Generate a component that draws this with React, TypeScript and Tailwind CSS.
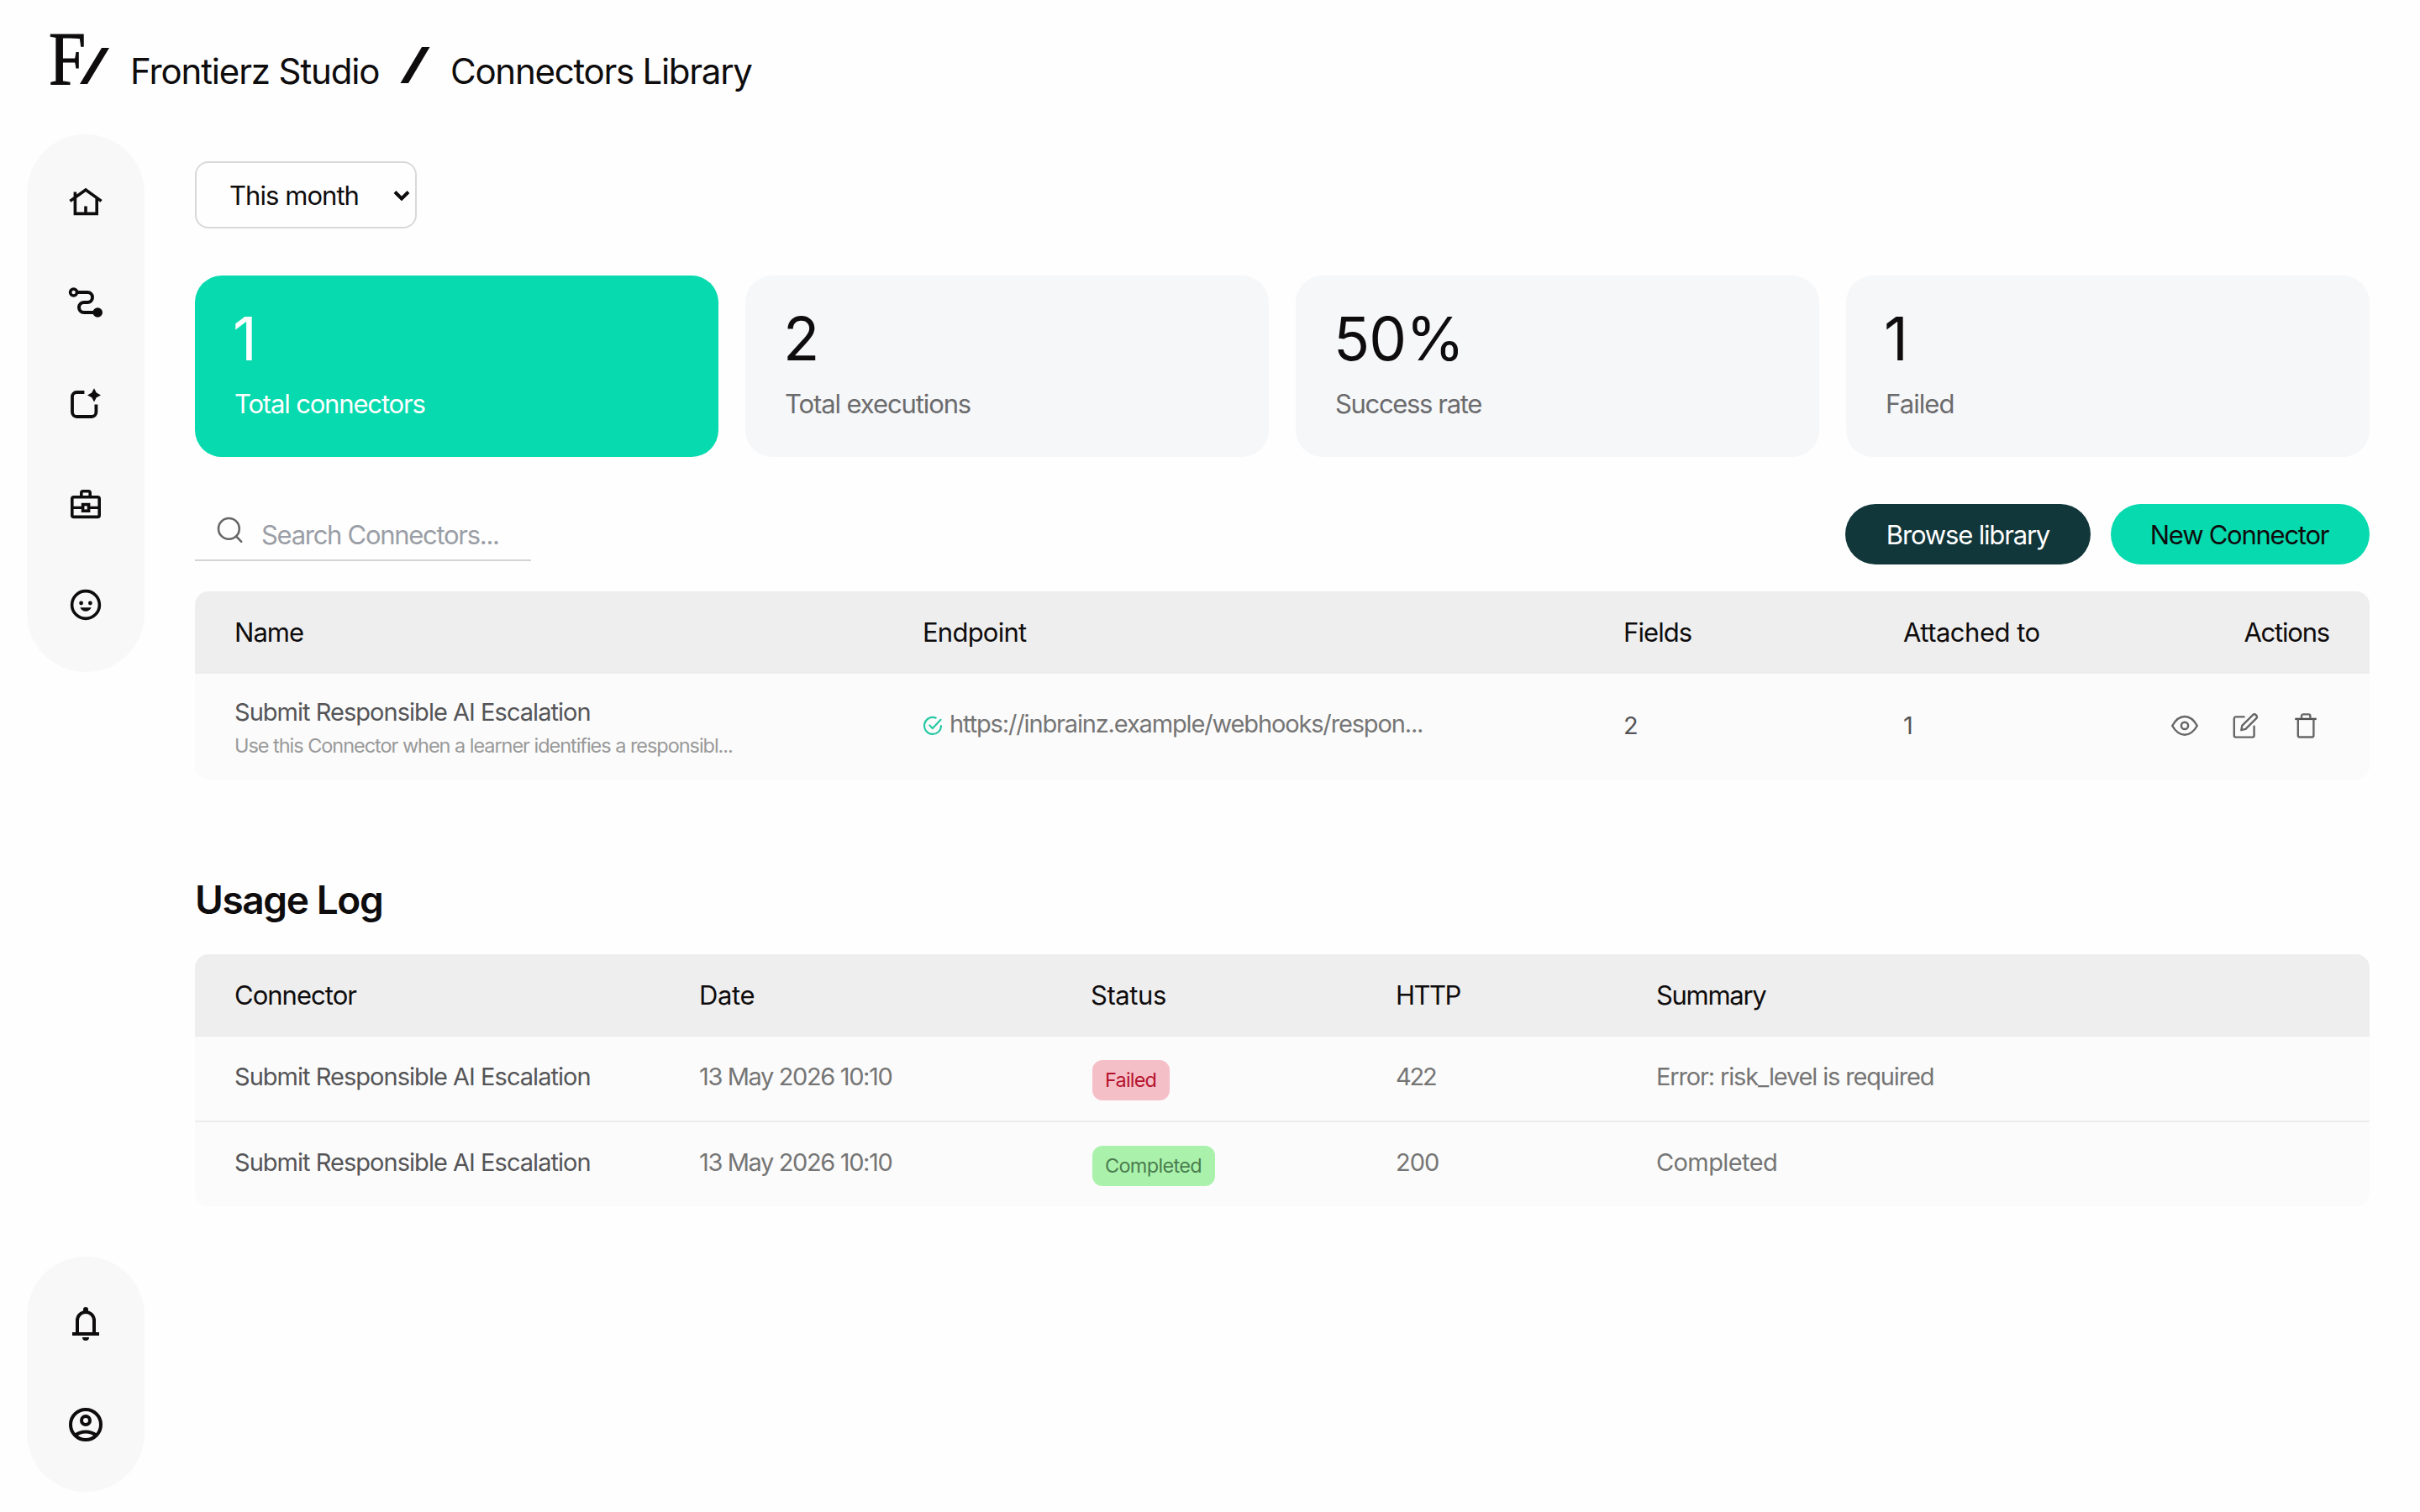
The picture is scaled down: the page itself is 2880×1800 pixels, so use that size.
import type { ReactNode } from 'react';
import clsx from 'clsx';

function NavIcon({ label, children }: { label: string; children: ReactNode }) {
  return (
    <button aria-label={label} className="flex h-[120px] w-full items-center justify-center text-[#0e0c0d]">
      <svg viewBox="0 0 24 24" className="size-12" fill="none" stroke="currentColor" strokeWidth={1.8}>
        {children}
      </svg>
    </button>
  );
}

function Sidebar() {
  return (
    <aside className="flex w-[140px] shrink-0 flex-col justify-between">
      <nav className="flex h-[640px] flex-col rounded-full bg-[#f8f8f8] pt-5">
        <NavIcon label="Home">
          <path d="M2.7 11.7 12 5l9.3 6.7M5.7 9.6V19.2h12.9V9.6M5.7 10V6.2M12 19.2v-4.4" />
        </NavIcon>
        <NavIcon label="Journeys">
          <circle cx="4.8" cy="6" r="2" />
          <path d="M6.8 6H13a3 3 0 0 1 0 6h-2a3 3 0 0 0 0 6h6" strokeWidth={2} />
          <circle cx="19.1" cy="18" r="2.9" fill="currentColor" stroke="none" />
        </NavIcon>
        <NavIcon label="Create">
          <path d="M11.2 5.5H6.6A2.6 2.6 0 0 0 4 8.1v9.3A2.6 2.6 0 0 0 6.6 20h9A2.6 2.6 0 0 0 18.2 17.4v-4.7" strokeWidth={1.9} />
          <path
            d="M17 3.1 18.4 5.8 21 7.2 18.4 8.6 17 11.3 15.6 8.6 13 7.2 15.6 5.8Z"
            fill="currentColor"
            stroke="none"
          />
        </NavIcon>
        <NavIcon label="Toolbox">
          <rect x="3.9" y="7.9" width="16.2" height="11.8" rx="1" />
          <path d="M9.4 7.6V5.4a1 1 0 0 1 1-1h3.2a1 1 0 0 1 1 1v2.2" />
          <path d="M4 14.2h6M14 14.2h6" strokeWidth={1.6} />
          <rect x="10.3" y="12.3" width="3.5" height="3.8" />
        </NavIcon>
        <NavIcon label="Assistants">
          <circle cx="12" cy="12" r="8.2" />
          <g fill="currentColor" stroke="none">
            <circle cx="9.3" cy="11" r="1.2" />
            <circle cx="14.7" cy="11" r="1.2" />
            <path d="M8.7 13.6h6.6c-.6 1.4-1.8 2.3-3.3 2.3s-2.7-.9-3.3-2.3Z" />
          </g>
        </NavIcon>
      </nav>
      <nav className="flex h-[280px] flex-col rounded-full bg-[#f8f8f8] pt-5">
        <NavIcon label="Notifications">
          <path d="M7 18v-8a5 5 0 0 1 10 0v8M4 18h16" strokeWidth={2} />
          <path d="M10.5 4.5v-1a1.5 1.5 0 0 1 3 0v1ZM10 20h4a2 2 0 0 1-4 0Z" fill="currentColor" stroke="none" />
        </NavIcon>
        <NavIcon label="Account">
          <circle cx="12" cy="12" r="9" strokeWidth={2} />
          <circle cx="12" cy="9.5" r="2.5" strokeWidth={2} />
          <path d="M5.7 18.4a10.4 10.4 0 0 1 12.6 0" strokeWidth={2} />
        </NavIcon>
      </nav>
    </aside>
  );
}

function Header() {
  return (
    <header className="flex h-40 shrink-0 items-start pt-10 pl-[58px] text-[42px] leading-[52px]">
      <div className="flex w-[97px] items-start">
        <span className="w-9 origin-left scale-x-[.88] font-['Liberation_Serif',serif] text-[90px] leading-[61px] [-webkit-text-stroke:1.2px_#0e0c0d]">
          F
        </span>
        <svg viewBox="0 0 35 43" className="mt-[17px] ml-px h-[43px] w-[35px]">
          <path d="M0 43 26 0h9L9 43Z" fill="#0e0c0d" />
        </svg>
      </div>
      <span className="mt-[19px] w-[321px] tracking-[-1.13px] whitespace-nowrap">Frontierz Studio</span>
      <svg viewBox="0 0 35 43" className="mt-4 mr-6 h-[43px] w-9">
        <path d="M0 43 25.5 0h9.5L9.5 43Z" fill="#0e0c0d" />
      </svg>
      <span className="mt-[19px] tracking-[-1.26px]">Connectors Library</span>
    </header>
  );
}

const stats = [
  { value: '1', label: 'Total connectors', tracking: 'tracking-[-1.16px]', active: true },
  { value: '2', label: 'Total executions', tracking: 'tracking-[-1.1px]' },
  { value: '50%', label: 'Success rate', tracking: 'tracking-[-1.35px]' },
  { value: '1', label: 'Failed', tracking: 'tracking-[-0.9px]' },
];

function StatCards() {
  return (
    <div className="mt-14 grid grid-cols-4 gap-8">
      {stats.map((s, i) => (
        <div
          key={i}
          className={clsx('h-[216px] rounded-[32px] px-12 pt-[38px]', s.active ? 'bg-[#06daae] text-white' : 'bg-[#f6f7f9]')}
        >
          <p className="-ml-[3px] pt-px text-[71px] leading-[72px] tracking-[-0.9px]">{s.value}</p>
          <p className={clsx('mt-[22px] -ml-px text-[31px] leading-10', s.tracking, !s.active && 'text-[#6b6b6d]')}>{s.label}</p>
        </div>
      ))}
    </div>
  );
}

function Toolbar() {
  return (
    <div className="mt-14 flex h-[72px] justify-between text-[31px]">
      <label className="flex h-[68px] w-[400px] items-center border-b-2 border-[#d4d4d4] pl-[26px]">
        <svg viewBox="0 0 32 32" className="-mt-1 size-8" fill="none" stroke="#666" strokeWidth={2.6}>
          <circle cx="14.4" cy="14.4" r="12.4" />
          <path d="m23.2 23.6 6 6.2" strokeLinecap="round" />
        </svg>
        <span className="mt-[7px] ml-[21px] leading-10 tracking-[-1.29px] text-[#9a9ea6]">Search Connectors...</span>
      </label>
      <div className="flex gap-6">
        <button className="w-[292px] rounded-full bg-[#12373a] pt-[3px] tracking-[-1.17px] text-white">Browse library</button>
        <button className="w-[308px] rounded-full bg-[#06daae] pt-[3px] pr-0.5 tracking-[-1.25px]">New Connector</button>
      </div>
    </div>
  );
}

function ConnectorsTable() {
  return (
    <section className="mt-8 overflow-hidden rounded-2xl bg-[#fbfbfb]">
      <div className="grid h-[98px] grid-cols-[818px_834px_333px_1fr] items-center border-b-2 border-[#ececec] bg-[#eeeeee] px-12 pt-[3px] text-[31px]">
        <span className="-ml-px tracking-[-0.97px]">Name</span>
        <span className="tracking-[-0.76px]">Endpoint</span>
        <span className="tracking-[-0.9px]">Fields</span>
        <div className="flex justify-between">
          <span className="tracking-[-0.5px]">Attached to</span>
          <span className="tracking-[-1.2px]">Actions</span>
        </div>
      </div>
      <div className="grid h-[126px] grid-cols-[818px_834px_333px_1fr] px-12 text-[29px] leading-10 text-[#555558]">
        <div className="-ml-px pt-[26px]">
          <p className="tracking-[-0.97px]">Submit Responsible AI Escalation</p>
          <p className="text-[23.5px] tracking-[-1.04px] text-[#999999]">
            Use this Connector when a learner identifies a responsibl...
          </p>
        </div>
        <div className="flex pt-[40px] text-[#757575]">
          <svg viewBox="0 0 24 24" className="mt-2.5 mr-2 size-6" fill="none" stroke="#27c9a4" strokeWidth={2.2} strokeLinecap="round" strokeLinejoin="round">
            <path d="M15.6 2.6A10 10 0 1 0 22 12" />
            <path d="m8.3 11.5 3.6 3.6L21.6 4.8" />
          </svg>
          <span className="tracking-[-1.15px]">https://inbrainz.example/webhooks/respon...</span>
        </div>
        <span className="pt-[42px]">2</span>
        <div className="flex justify-between pt-[42px]">
          <span>1</span>
          <div className="mt-1 mr-3 flex gap-10 text-[#666666]">
            <svg viewBox="0 0 32 32" className="size-8" fill="none" stroke="currentColor" strokeWidth={2.5} strokeLinejoin="round">
              <path d="M1.2 16C5.3 8.8 10.1 5.1 16 5.1S26.7 8.8 30.8 16C26.7 23.2 21.9 26.7 16 26.7S5.3 23.2 1.2 16Z" />
              <circle cx="16" cy="15.9" r="4.1" />
            </svg>
            <svg viewBox="0 0 32 32" className="size-8" fill="none" stroke="currentColor" strokeWidth={2.4} strokeLinecap="round" strokeLinejoin="round">
              <path d="M14.6 5.4H4.8a2 2 0 0 0-2 2V27.6a2 2 0 0 0 2 2H24.6a2 2 0 0 0 2-2V16.7" />
              <path d="m11.3 21.2 1-5.4L24.9 3.3a2.9 2.9 0 0 1 4.1 4.1L16.5 19.9Z" />
            </svg>
            <svg viewBox="0 0 32 32" className="size-8" fill="none" stroke="currentColor" strokeWidth={2.4} strokeLinejoin="round">
              <path d="M3.3 7.9H28.7" stroke="#4a4a4a" />
              <path d="M6.8 8V27.5a2 2 0 0 0 2 2H23.4a2 2 0 0 0 2-2V8M11 7.5V4.4a2 2 0 0 1 2-2h6.4a2 2 0 0 1 2 2V7.5" />
            </svg>
          </div>
        </div>
      </div>
    </section>
  );
}

const logs = [
  { status: 'Failed', http: '422', summary: 'Error: risk_level is required' },
  { status: 'Completed', http: '200', summary: 'Completed' },
];

function UsageLog() {
  return (
    <>
      <h2 className="mt-[115px] text-[46px] leading-[56px] font-semibold tracking-[-1.4px]">Usage Log</h2>
      <section className="mt-[37px] overflow-hidden rounded-2xl bg-[#fbfbfb]">
        <div className="grid h-[98px] grid-cols-[552px_466px_363px_310px_1fr] items-center border-b-2 border-[#ececec] bg-[#eeeeee] px-12 pt-[3px] text-[31px]">
          <span className="-ml-px tracking-[-0.98px]">Connector</span>
          <span className="tracking-[-0.4px]">Date</span>
          <span className="tracking-[-0.41px]">Status</span>
          <span className="tracking-[-1.5px]">HTTP</span>
          <span className="tracking-[-1.3px] whitespace-nowrap">Summary</span>
        </div>
        {logs.map((log) => {
          const failed = log.status === 'Failed';
          return (
            <div
              key={log.status}
              className={clsx(
                'grid grid-cols-[552px_466px_363px_310px_1fr] px-12 pt-7 text-[29px] leading-10 text-[#757575]',
                failed ? 'h-[102px] border-b-2 border-[#ececec]' : 'h-[100px]',
              )}
            >
              <span className="-ml-px tracking-[-0.97px] text-[#555558]">Submit Responsible AI Escalation</span>
              <span className="tracking-[-1.37px]">13 May 2026 10:10</span>
              <span
                className={clsx(
                  'ml-0.5 h-12 w-fit rounded-xl pr-4 pl-[15px] text-[23.5px] leading-12',
                  failed ? 'bg-[#f5bfc8] tracking-[-0.8px] text-[#b5132d]' : 'bg-[#aaf2ac] tracking-[-0.7px] text-[#4b7d4f]',
                )}
              >
                {log.status}
              </span>
              <span className={failed ? 'tracking-[-2.2px]' : 'tracking-[-1px]'}>{log.http}</span>
              <span className={failed ? 'tracking-[-1.16px]' : 'tracking-[-0.6px]'}>{log.summary}</span>
            </div>
          );
        })}
      </section>
    </>
  );
}

export default function App() {
  return (
    <div className="flex h-[1800px] w-[2880px] flex-col overflow-hidden bg-[#fefefe] font-['Inter',sans-serif] text-[#0e0c0d]">
      <Header />
      <div className="flex flex-1 gap-[60px] pr-[60px] pb-6 pl-8">
        <Sidebar />
        <main className="flex-1 pt-8">
          <button className="flex h-20 w-[264px] items-center justify-between rounded-2xl border-2 border-[#d9d9d9] pr-1.5 pl-[39px] text-[31px] tracking-[-0.95px]">
            <span className="pt-0.5">This month</span>
            <svg viewBox="0 0 20 12" className="mt-px h-3 w-5" fill="none" stroke="currentColor" strokeWidth={4}>
              <path d="m2 1.5 8 8 8-8" />
            </svg>
          </button>
          <StatCards />
          <Toolbar />
          <ConnectorsTable />
          <UsageLog />
        </main>
      </div>
    </div>
  );
}
